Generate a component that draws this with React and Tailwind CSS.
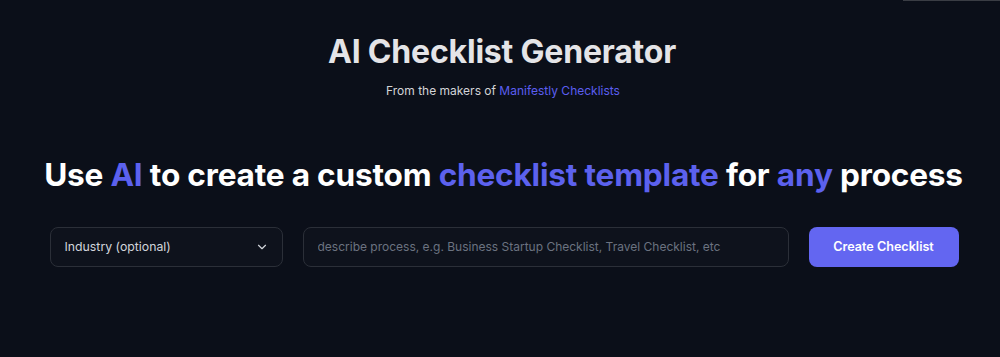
import React from 'react';
import { ChevronDown } from 'lucide-react';

const App = () => {
  return (
    <div
      className="min-h-[357px] w-full bg-[#0b0f19] text-white"
      style={{ fontFamily: 'Inter, "Noto Sans", sans-serif' }}
    >
      {/* top right edge line */}
      <div className="flex justify-end">
        <div className="h-px w-[97px] bg-[#3a3d44]" />
      </div>

      <div className="flex flex-col items-center pt-[31px]">
        <h1 className="pl-[4px] text-[32px] font-bold leading-[40px] tracking-[-0.2px] text-[#e4e4e7]">
          AI Checklist Generator
        </h1>
        <p className="mt-[9px] pl-[6px] text-[12px] leading-5 text-[#d4d4d8]">
          From the makers of <span className="text-[#5b5ef0]">Manifestly Checklists</span>
        </p>

        <h2 className="mt-[54px] pl-[7px] text-[31.6px] font-bold leading-[40px] tracking-[-0.2px] text-white">
          Use <span className="text-[#5c61ee]">AI</span> to create a custom{' '}
          <span className="text-[#5c61ee]">checklist template</span> for{' '}
          <span className="text-[#5c61ee]">any</span> process
        </h2>

        <div className="mt-[32px] flex gap-5 pl-[8px]">
          <div className="flex h-10 w-[233px] items-center justify-between rounded-lg border border-[#2b2f38] bg-[#0e121c] pl-[14px] pr-[13px]">
            <span className="text-[12.3px] text-[#d1d5db]">Industry (optional)</span>
            <ChevronDown className="h-3.5 w-3.5 text-[#d1d5db]" strokeWidth={2} />
          </div>
          <div className="flex h-10 w-[486px] items-center rounded-lg border border-[#2b2f38] bg-[#0e121c] px-[14px]">
            <input
              className="w-full bg-transparent text-[12px] text-white placeholder-[#6b7280] outline-none"
              placeholder="describe process, e.g. Business Startup Checklist, Travel Checklist, etc"
            />
          </div>
          <button className="flex h-10 w-[150px] items-center justify-center rounded-lg bg-[#6366f1] text-[12.6px] font-semibold text-white">
            Create Checklist
          </button>
        </div>
      </div>
    </div>
  );
};

export default App;
